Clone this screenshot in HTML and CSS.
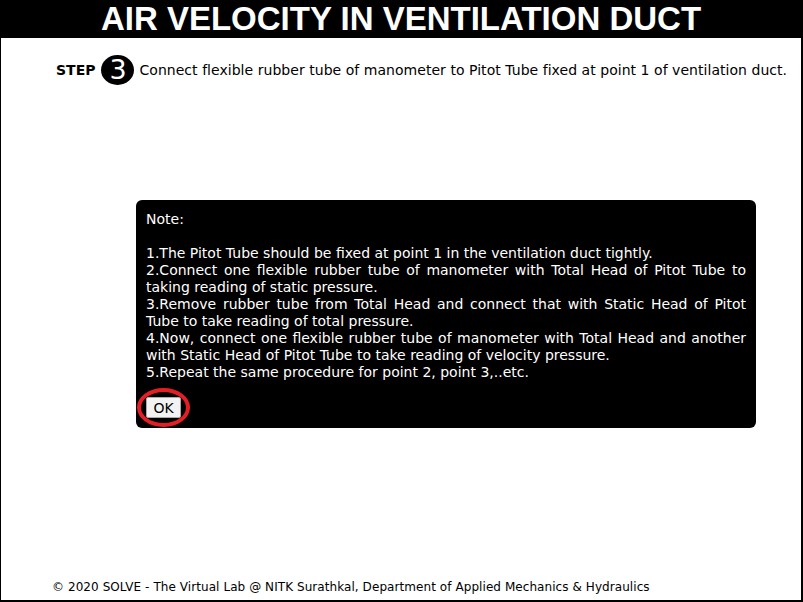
FILE: index.html
```html
<!DOCTYPE html>
<html>
<head>
<meta charset="utf-8">
<link rel="stylesheet" href="styles.css">
</head>
<body>
<div class="frame">
  <header class="title">AIR VELOCITY IN VENTILATION DUCT</header>
  <div class="step">
    <span class="step-label">STEP</span>
    <span class="step-num">3</span>
    <span class="step-text">Connect flexible rubber tube of manometer to Pitot Tube fixed at point 1 of ventilation duct.</span>
  </div>
  <main class="content">
    <div class="note">
      <p class="note-head">Note:</p>
      <p class="note-body">1.The Pitot Tube should be fixed at point 1 in the ventilation duct tightly.<br>2.Connect one flexible rubber tube of manometer with Total Head of Pitot Tube to taking reading of static pressure.<br>3.Remove rubber tube from Total Head and connect that with Static Head of Pitot Tube to take reading of total pressure.<br>4.Now, connect one flexible rubber tube of manometer with Total Head and another with Static Head of Pitot Tube to take reading of velocity pressure.<br>5.Repeat the same procedure for point 2, point 3,..etc.</p>
      <div class="ok-wrap">
        <button class="ok">OK</button>
        <span class="ring"></span>
      </div>
    </div>
  </main>
  <footer class="footer">© 2020 SOLVE - The Virtual Lab @ NITK Surathkal, Department of Applied Mechanics &amp; Hydraulics</footer>
</div>
</body>
</html>
```
FILE: styles.css
```css
* { box-sizing: border-box; }
html, body { margin: 0; padding: 0; background: #fff; }
.frame {
  width: 803px;
  height: 602px;
  border: 1px solid #000;
  border-right-width: 2px;
  border-bottom-width: 2px;
  display: flex;
  flex-direction: column;
  font-family: "DejaVu Sans", Verdana, sans-serif;
}
.title {
  background: #000;
  color: #fff;
  font-family: "Liberation Sans", Arial, sans-serif;
  font-weight: bold;
  font-size: 33px;
  height: 38px;
  line-height: 38px;
  text-align: center;
  margin: -1px -1px 0 -1px;
}
.step {
  display: flex;
  align-items: center;
  padding: 16px 0 0 55px;
  height: 48px;
}
.step-label {
  font-weight: bold;
  font-size: 14px;
  margin-right: 6px;
}
.step-num {
  width: 33px;
  height: 30px;
  border-radius: 50%;
  background: #000;
  color: #fff;
  font-size: 27px;
  line-height: 30px;
  display: flex;
  align-items: center;
  justify-content: center;
  margin-right: 5px;
}
.step-text { font-size: 14px; letter-spacing: 0.04px; }
.content {
  flex: 1;
  padding: 114px 0 0 135px;
}
.note {
  width: 620px;
  background: #000;
  color: #fff;
  border-radius: 6px;
  padding: 11px 10px 10px 10px;
  font-size: 14px;
  line-height: 17px;
}
.note p { margin: 0; }
.note-head { margin-bottom: 17px !important; }
.note-body { text-align: justify; }
.ok-wrap {
  position: relative;
  margin-top: 16px;
  height: 21px;
}
.ok {
  display: block;
  font-family: "DejaVu Sans", Verdana, sans-serif;
  font-size: 14px;
  background: #f2f2f2;
  border: 1px solid #aaa;
  border-radius: 2px;
  width: 35px;
  height: 21px;
  padding: 0;
  color: #000;
}
.ring {
  position: absolute;
  left: -9px;
  top: -9px;
  width: 53px;
  height: 39px;
  border: 4px solid #e31e24;
  border-radius: 50%;
}
.footer {
  font-size: 12px;
  letter-spacing: 0.07px;
  padding: 0 0 6px 51px;
}
```
